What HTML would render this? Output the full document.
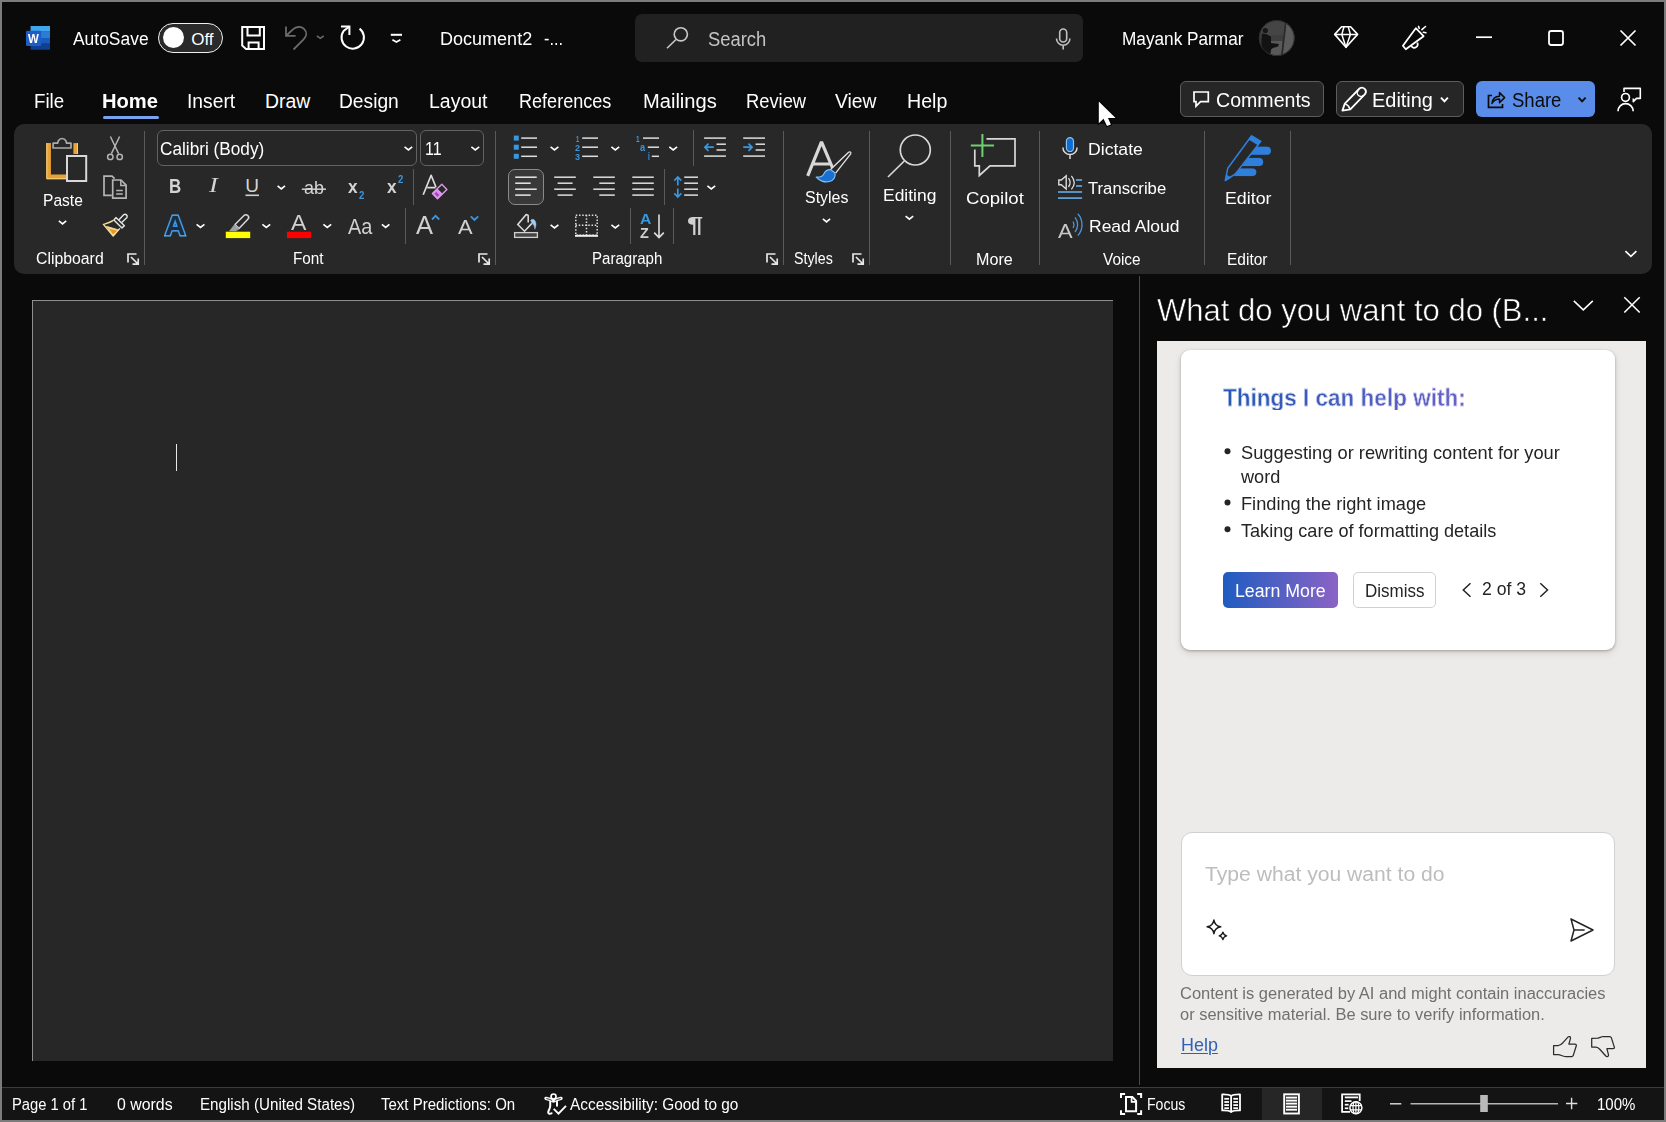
<!DOCTYPE html>
<html lang="en"><head><meta charset="utf-8"><title>Document2 - Word</title>
<style>
html,body{margin:0;padding:0;}
body{width:1666px;height:1122px;overflow:hidden;background:#0a0a0a;font-family:"Liberation Sans",sans-serif;position:relative;}
#win{position:absolute;left:0;top:0;width:1666px;height:1122px;box-sizing:border-box;border:2px solid #7c7c7c;z-index:9;pointer-events:none;}
#bg div{position:absolute;}
svg#ic{position:absolute;left:0;top:0;}
.t{position:absolute;white-space:nowrap;line-height:1;transform-origin:0 50%;}
</style></head><body>
<div id="bg">
<div style="left:14px;top:124px;width:1638px;height:150px;background:#282828;border-radius:10px;"></div>
<div style="left:635px;top:14px;width:448px;height:48px;background:#212121;border-radius:7px;"></div>
<div style="left:32px;top:300px;width:1081px;height:761px;background:#272727;border-left:1px solid #8f8f8f;border-top:1px solid #8f8f8f;box-sizing:border-box;"></div>
<div style="left:176px;top:444px;width:1px;height:27px;background:#e8e8e8;"></div>
<div style="left:1139px;top:276px;width:1px;height:809px;background:#4a4a4a;"></div>
<div style="left:2px;top:1087px;width:1662px;height:33px;background:#141414;border-top:1px solid #3c3c3c;box-sizing:border-box;"></div>
<div style="left:1262px;top:1088px;width:60px;height:32px;background:#262626;"></div>
<div style="left:1157px;top:341px;width:489px;height:727px;background:#ecebe9;"></div>
<div style="left:1181px;top:350px;width:434px;height:300px;background:#fff;border-radius:9px;box-shadow:0 1px 3px rgba(0,0,0,.28),0 3px 8px rgba(0,0,0,.10);"></div>
<div style="left:1181px;top:832px;width:434px;height:144px;background:#fff;border-radius:11px;border:1px solid #d1d1d1;box-sizing:border-box;"></div>
<div style="left:1223px;top:572px;width:115px;height:36px;background:linear-gradient(90deg,#1f5cc0,#8b63c5);border-radius:5px;"></div>
<div style="left:1353px;top:572px;width:83px;height:36px;background:#fff;border:1px solid #d1d1d1;border-radius:5px;box-sizing:border-box;"></div>
<div style="left:1180px;top:81px;width:144px;height:36px;background:#262626;border:1px solid #5c5c5c;border-radius:6px;box-sizing:border-box;"></div>
<div style="left:1336px;top:81px;width:128px;height:36px;background:#262626;border:1px solid #5c5c5c;border-radius:6px;box-sizing:border-box;"></div>
<div style="left:1476px;top:81px;width:119px;height:36px;background:#598de9;border-radius:6px;"></div>
<div style="left:102.5px;top:115.5px;width:56px;height:3px;background:#7aa2ee;border-radius:2px;"></div>
<div style="left:157px;top:130px;width:260px;height:36px;border:1px solid #626262;border-radius:6px;box-sizing:border-box;background:#262626;"></div>
<div style="left:420px;top:130px;width:64px;height:36px;border:1px solid #626262;border-radius:6px;box-sizing:border-box;background:#262626;"></div>
<div style="left:508px;top:169px;width:36px;height:36px;border:1px solid #8a8a8a;border-radius:7px;box-sizing:border-box;background:#383838;"></div>
<div style="left:158.2px;top:23px;width:64.6px;height:30px;border:1.5px solid #f0f0f0;border-radius:15px;box-sizing:border-box;background:#2a2a2a;"></div>
<div style="left:163px;top:27.3px;width:21px;height:21px;background:#fff;border-radius:50%;"></div>
<div style="left:144.0px;top:131px;width:1px;height:134px;background:#5a5a5a;"></div>
<div style="left:495.0px;top:131px;width:1px;height:134px;background:#5a5a5a;"></div>
<div style="left:783.0px;top:131px;width:1px;height:134px;background:#5a5a5a;"></div>
<div style="left:869.0px;top:131px;width:1px;height:134px;background:#5a5a5a;"></div>
<div style="left:950.0px;top:131px;width:1px;height:134px;background:#5a5a5a;"></div>
<div style="left:1039.0px;top:131px;width:1px;height:134px;background:#5a5a5a;"></div>
<div style="left:1204.0px;top:131px;width:1px;height:134px;background:#5a5a5a;"></div>
<div style="left:1290.0px;top:131px;width:1px;height:134px;background:#5a5a5a;"></div>
<div style="left:413px;top:169px;width:1px;height:36px;background:#5a5a5a;"></div>
<div style="left:405px;top:208px;width:1px;height:36px;background:#5a5a5a;"></div>
<div style="left:693px;top:130px;width:1px;height:36px;background:#5a5a5a;"></div>
<div style="left:664px;top:169px;width:1px;height:36px;background:#5a5a5a;"></div>
<div style="left:630px;top:208px;width:1px;height:36px;background:#5a5a5a;"></div>
<div style="left:673px;top:208px;width:1px;height:36px;background:#5a5a5a;"></div>
</div>
<svg id="ic" width="1666" height="1122" viewBox="0 0 1666 1122">
<rect x="30.6" y="26" width="19.4" height="5.7" fill="#41a5ee"/><rect x="30.6" y="31.6" width="19.4" height="6.4" fill="#2b7cd3"/><rect x="30.6" y="38" width="19.4" height="5.8" fill="#185abd"/><rect x="30.6" y="43.7" width="19.4" height="6" fill="#103f91"/>
<rect x="30.6" y="26" width="19.4" height="23.7" rx="1.2" fill="none"/>
<rect x="26" y="30.8" width="15.2" height="15.2" rx="1.3" fill="#1e5ec4"/>
<path d="M242.2 27H264V49H246L242.2 45.5Z" stroke="#fff" stroke-width="2" fill="none" stroke-linejoin="miter" stroke-linecap="butt" />
<path d="M247.5 27V35.6H259.8V27" stroke="#fff" stroke-width="2" fill="none" stroke-linejoin="miter" stroke-linecap="butt" />
<path d="M248.6 49V42.6H258.6V49" stroke="#fff" stroke-width="2" fill="none" stroke-linejoin="miter" stroke-linecap="butt" />
<path d="M286 26.5V35.8H295.6" stroke="#6b6b6b" stroke-width="1.8" fill="none" stroke-linejoin="miter" stroke-linecap="butt" />
<path d="M286.3 35.5L293 29.3C296 26.6 301 26 304 28.8C307.3 32 306.6 36.3 303.6 39.4L293.5 49.5" stroke="#6b6b6b" stroke-width="1.8" fill="none" stroke-linejoin="miter" stroke-linecap="butt" />
<path d="M316.90 35.85L320.30 38.35L323.70 35.85" stroke="#6b6b6b" stroke-width="1.6" fill="none" stroke-linejoin="miter" stroke-linecap="butt" />
<path d="M359.6 28.6A11.2 11.2 0 1 1 343.6 31L349 26.8" stroke="#fff" stroke-width="2" fill="none" stroke-linejoin="miter" stroke-linecap="butt" />
<path d="M341 26.6H349.4V35" stroke="#fff" stroke-width="2" fill="none" stroke-linejoin="miter" stroke-linecap="butt" />
<line x1="390.8" y1="34.8" x2="402" y2="34.8" stroke="#fff" stroke-width="2" stroke-linecap="butt"/>
<path d="M392.40 39.75L396.40 42.05L400.40 39.75" stroke="#fff" stroke-width="1.65" fill="none" stroke-linejoin="miter" stroke-linecap="butt" />
<circle cx="680.8" cy="34.3" r="6.6" stroke="#c8c8c8" stroke-width="1.6" fill="none"/>
<line x1="676" y1="39.5" x2="667" y2="48.3" stroke="#c8c8c8" stroke-width="1.6" stroke-linecap="butt"/>
<rect x="1059.7" y="29" width="7" height="13" rx="3.5" stroke="#c0c0c0" stroke-width="1.6" fill="none"/>
<path d="M1056.5 38.5A6.7 6.7 0 0 0 1069.9 38.5M1063.2 45.3V49.5" stroke="#c0c0c0" stroke-width="1.6" fill="none" stroke-linejoin="miter" stroke-linecap="butt" />
<clipPath id="av"><circle cx="1276.7" cy="38" r="17.8"/></clipPath><g clip-path="url(#av)"><rect x="1258" y="19" width="38" height="38" fill="#454545"/><polygon points="1286.5,19 1296,19 1296,58 1282.5,58" fill="#5b5b5b"/><rect x="1270.5" y="41" width="11.5" height="17" fill="#595959"/><rect x="1271" y="35" width="12" height="6" fill="#3e3e3e"/><path d="M1262 33.5L1266 34L1271 36.5V43L1279 44L1278 46.5L1273 48L1271 49.5L1270 57L1259 51Z" fill="#131313"/><circle cx="1265.3" cy="30.5" r="2.6" fill="#171717"/><rect x="1258" y="30" width="3.5" height="24" fill="#3a3a3a"/><line x1="1286" y1="21" x2="1281.6" y2="57" stroke="#2a2a2a" stroke-width="1.7"/></g><circle cx="1276.7" cy="38" r="17.5" stroke="#2a2a2a" stroke-width="1" fill="none"/>
<path d="M1341.6 26.8H1350.6L1357.6 34.4L1346 47.3L1334.7 34.4Z" stroke="#fff" stroke-width="1.6" fill="none" stroke-linejoin="round" stroke-linecap="butt" />
<path d="M1334.7 34.4H1357.6M1341.8 34.4L1346 47.3L1350.4 34.4M1341.8 34.4L1344 26.8M1350.4 34.4L1348.2 26.8" stroke="#fff" stroke-width="1.5" fill="none" stroke-linejoin="round" stroke-linecap="butt" />
<path d="M1415.8 28.2L1423.6 36.2L1405.8 49.3L1402.9 45.8Z" stroke="#fff" stroke-width="1.8" fill="none" stroke-linejoin="round" stroke-linecap="butt" />
<path d="M1411.2 45.9A3.4 3.4 0 0 0 1417.3 42.6" stroke="#fff" stroke-width="1.8" fill="none" stroke-linejoin="miter" stroke-linecap="butt" />
<path d="M1418.5 26.4L1419.2 28.2M1421.9 29.7L1425.5 26.5M1423.4 32.3L1425.9 32.8" stroke="#fff" stroke-width="1.6" fill="none" stroke-linejoin="miter" stroke-linecap="round" />
<line x1="1476" y1="37.2" x2="1492" y2="37.2" stroke="#fff" stroke-width="1.7" stroke-linecap="butt"/>
<rect x="1549" y="31" width="14" height="14" rx="2.2" stroke="#fff" stroke-width="1.8" fill="none"/>
<path d="M1620.5 30.5L1635.5 45.5M1635.5 30.5L1620.5 45.5" stroke="#fff" stroke-width="1.7" fill="none" stroke-linejoin="miter" stroke-linecap="butt" />
<path d="M1194 92H1208.3V101.7H1200.6L1196 106.2V101.7H1194Z" stroke="#fff" stroke-width="1.7" fill="none" stroke-linejoin="miter" stroke-linecap="butt" />
<path d="M1344.8 103.6L1359.5 88.5A4 4 0 0 1 1365 94.2L1350.3 109.4L1342.4 110.6Z" stroke="#fff" stroke-width="1.8" fill="none" stroke-linejoin="round" stroke-linecap="butt" />
<path d="M1344.8 103.6Q1348.6 105 1350.3 109.4" stroke="#fff" stroke-width="1.5" fill="none" stroke-linejoin="miter" stroke-linecap="butt" />
<path d="M1358.3 90.4A3.2 3.2 0 0 0 1363.2 95.4" stroke="#fff" stroke-width="1.4" fill="none" stroke-linejoin="miter" stroke-linecap="butt" />
<path d="M1441.00 97.60L1444.45 101.30L1447.90 97.60" stroke="#fff" stroke-width="1.9" fill="none" stroke-linejoin="miter" stroke-linecap="butt" />
<path d="M1492 95.5H1488.5V107.3H1502.5V104" stroke="#0b0b0b" stroke-width="1.7" fill="none" stroke-linejoin="miter" stroke-linecap="butt" />
<path d="M1492 103.5C1492.5 98.5 1495.5 96.3 1499.5 96.3V92.6L1504.6 97.6L1499.5 102.6V99C1496.5 99 1494 100 1492 103.5Z" stroke="#0b0b0b" stroke-width="1.5" fill="none" stroke-linejoin="round" stroke-linecap="butt" />
<path d="M1578.60 97.60L1582.10 101.30L1585.60 97.60" stroke="#0b0b0b" stroke-width="1.9" fill="none" stroke-linejoin="miter" stroke-linecap="butt" />
<circle cx="1625.5" cy="97.4" r="3.9" stroke="#fff" stroke-width="1.7" fill="none"/>
<path d="M1618 111.2A7.6 7.6 0 0 1 1633.2 111.2" stroke="#fff" stroke-width="1.7" fill="none" stroke-linejoin="miter" stroke-linecap="butt" />
<path d="M1624 92V88.4H1640.3V98.4H1636.5L1633.3 101.6V98.6" stroke="#fff" stroke-width="1.6" fill="none" stroke-linejoin="round" stroke-linecap="butt" />
<path d="M1098.8 101.5V123.2L1103.5 118.8L1107 125.9L1110.9 124.4L1108 118.1H1115.6Z" fill="#fff" stroke="#000" stroke-width="2" paint-order="stroke" stroke-linejoin="miter"/>
<path d="M48.6 143.1V176.9H66.5" stroke="#e9a334" stroke-width="4.6" fill="none" stroke-linejoin="miter" stroke-linecap="butt" />
<path d="M75.7 143.1V154" stroke="#e9a334" stroke-width="4.6" fill="none" stroke-linejoin="miter" stroke-linecap="butt" />
<path d="M46.8 143.1V178.7H66" stroke="#f7cf80" stroke-width="1" fill="none" stroke-linejoin="miter" stroke-linecap="butt" />
<path d="M77.5 143.1V154" stroke="#f7cf80" stroke-width="1" fill="none" stroke-linejoin="miter" stroke-linecap="butt" />
<path d="M53.1 143.2H57.6C57.9 142.3 58 141.5 58.3 140.8A4.3 4.3 0 0 1 65.9 140.8C66.2 141.6 66.3 142.3 66.6 143.2H71V148H53.1Z" stroke="#ababab" stroke-width="1.7" fill="#282828" stroke-linejoin="round" stroke-linecap="butt" />
<rect x="67" y="156" width="19.2" height="25" rx="0" stroke="#d8d8d8" stroke-width="2" fill="#282828"/>
<path d="M58.90 220.85L62.55 223.85L66.20 220.85" stroke="#fff" stroke-width="1.65" fill="none" stroke-linejoin="miter" stroke-linecap="butt" />
<path d="M110.4 136.5L118.6 153.6M119.6 136.5L111.4 153.6" stroke="#b4b4b4" stroke-width="1.5" fill="none" stroke-linejoin="miter" stroke-linecap="butt" />
<circle cx="110.3" cy="156.9" r="2.7" stroke="#b4b4b4" stroke-width="1.5" fill="none"/><circle cx="119.7" cy="156.9" r="2.7" stroke="#b4b4b4" stroke-width="1.5" fill="none"/>
<path d="M111.8 195.3H104V176.1H112L114.6 178.7" stroke="#b4b4b4" stroke-width="1.7" fill="none" stroke-linejoin="miter" stroke-linecap="butt" />
<path d="M112.7 180H121L126.1 185.2V198.2H112.7Z" stroke="#b4b4b4" stroke-width="1.7" fill="none" stroke-linejoin="miter" stroke-linecap="butt" />
<path d="M120.8 180V185.4H126.1" stroke="#b4b4b4" stroke-width="1.5" fill="none" stroke-linejoin="miter" stroke-linecap="butt" />
<path d="M116.2 190.4H122.8M116.2 193.9H122.8" stroke="#b4b4b4" stroke-width="1.5" fill="none" stroke-linejoin="miter" stroke-linecap="butt" />
<path d="M106.5 226.3L118.3 229.8L113.2 235.4Z" stroke="#f6d98f" stroke-width="0.8" fill="#f6d98f" stroke-linejoin="round" stroke-linecap="butt" />
<path d="M109.9 229.3L117.2 231L112.9 233.9Z" stroke="#e6952a" stroke-width="0.6" fill="#e6952a" stroke-linejoin="round" stroke-linecap="butt" />
<path d="M113.4 220.4C110 222.6 106 223.6 103.4 224.4L113.2 236L119.9 228.4" stroke="#f8df9c" stroke-width="1.4" fill="none" stroke-linejoin="round" stroke-linecap="butt" />
<path d="M113.9 220L115.9 217.6L124.4 225.8L122 227.9Z" stroke="#e6e6e6" stroke-width="1.4" fill="none" stroke-linejoin="round" stroke-linecap="butt" />
<path d="M119 219.8L123.9 214.6A2.2 2.2 0 0 1 127 217.4L121.7 222.6" stroke="#e6e6e6" stroke-width="1.4" fill="none" stroke-linejoin="round" stroke-linecap="butt" />
<path d="M136.5 254H128V262.5" stroke="#e6e6e6" stroke-width="1.7" fill="none" stroke-linejoin="miter" stroke-linecap="butt" />
<path d="M131 257L138 264M132.5 264.2H138.2V258.5" stroke="#e6e6e6" stroke-width="1.7" fill="none" stroke-linejoin="miter" stroke-linecap="butt" />
<path d="M404.60 146.95L408.40 149.95L412.20 146.95" stroke="#fff" stroke-width="1.65" fill="none" stroke-linejoin="miter" stroke-linecap="butt" />
<path d="M471.40 146.95L475.30 149.95L479.20 146.95" stroke="#fff" stroke-width="1.65" fill="none" stroke-linejoin="miter" stroke-linecap="butt" />
<path d="M277.60 185.85L281.30 188.85L285.00 185.85" stroke="#fff" stroke-width="1.65" fill="none" stroke-linejoin="miter" stroke-linecap="butt" />
<line x1="245.5" y1="195.3" x2="259" y2="195.3" stroke="#d0d0d0" stroke-width="1.6" stroke-linecap="butt"/>
<line x1="301.8" y1="189.2" x2="326" y2="189.2" stroke="#d0d0d0" stroke-width="1.5" stroke-linecap="butt"/>
<path d="M423.2 194.8L431.15 175.3L436 187.2M427.3 187.6H435.6" stroke="#dcdcdc" stroke-width="1.7" fill="none" stroke-linejoin="round" stroke-linecap="butt" />
<path d="M437 189.2L442.2 194.3L437.5 198.8L432.4 193.5Z" stroke="#d690e6" stroke-width="0.5" fill="#d690e6" stroke-linejoin="miter" stroke-linecap="butt" />
<path d="M436.3 192.2L439 194.9L437.4 196.6L434.7 193.8Z" stroke="#a63fc2" stroke-width="0.5" fill="#a63fc2" stroke-linejoin="miter" stroke-linecap="butt" />
<path d="M441.8 184.3L446.9 189.4L437.5 198.8L432.4 193.5Z" stroke="#d99ce8" stroke-width="1.4" fill="none" stroke-linejoin="round" stroke-linecap="butt" />
<path d="M437 189.2L442.2 194.3" stroke="#d99ce8" stroke-width="1.4" fill="none" stroke-linejoin="miter" stroke-linecap="butt" />
<path d="M196.60 224.35L200.50 227.45L204.40 224.35" stroke="#fff" stroke-width="1.65" fill="none" stroke-linejoin="miter" stroke-linecap="butt" />
<path d="M262.40 224.35L266.30 227.45L270.20 224.35" stroke="#fff" stroke-width="1.65" fill="none" stroke-linejoin="miter" stroke-linecap="butt" />
<path d="M323.40 224.35L327.30 227.45L331.20 224.35" stroke="#fff" stroke-width="1.65" fill="none" stroke-linejoin="miter" stroke-linecap="butt" />
<path d="M381.90 224.35L385.65 227.45L389.40 224.35" stroke="#fff" stroke-width="1.65" fill="none" stroke-linejoin="miter" stroke-linecap="butt" />
<rect x="225.8" y="231.7" width="24.4" height="6.4" fill="#ffff00"/>
<path d="M235 224.5L244 215.5A2.6 2.6 0 0 1 247.8 219.3L239 228.5Z" stroke="#d8d8d8" stroke-width="1.5" fill="none" stroke-linejoin="round" stroke-linecap="butt" />
<path d="M234.5 224.5L239 229L236 231H229.5Z" stroke="#a0a0a0" stroke-width="0.6" fill="#a0a0a0" stroke-linejoin="miter" stroke-linecap="butt" />
<rect x="287" y="231.7" width="24.2" height="6.4" fill="#ff0000"/>
<path d="M432 219.5L435.6 215.8L439.2 219.5" stroke="#3a96dd" stroke-width="1.8" fill="none" stroke-linejoin="miter" stroke-linecap="butt" />
<path d="M470.8 216.3L474.5 220L478.2 216.3" stroke="#3a96dd" stroke-width="1.8" fill="none" stroke-linejoin="miter" stroke-linecap="butt" />
<path d="M487.5 254H479V262.5" stroke="#e6e6e6" stroke-width="1.7" fill="none" stroke-linejoin="miter" stroke-linecap="butt" />
<path d="M482 257L489 264M483.5 264.2H489.2V258.5" stroke="#e6e6e6" stroke-width="1.7" fill="none" stroke-linejoin="miter" stroke-linecap="butt" />
<rect x="513.8" y="135.6" width="5" height="5" fill="#3a96dd"/>
<line x1="521.2" y1="138.1" x2="537" y2="138.1" stroke="#dedede" stroke-width="1.5" stroke-linecap="butt"/>
<line x1="582.2" y1="138.1" x2="598" y2="138.1" stroke="#dedede" stroke-width="1.5" stroke-linecap="butt"/>
<rect x="513.8" y="144.7" width="5" height="5" fill="#3a96dd"/>
<line x1="521.2" y1="147.2" x2="537" y2="147.2" stroke="#dedede" stroke-width="1.5" stroke-linecap="butt"/>
<line x1="582.2" y1="147.2" x2="598" y2="147.2" stroke="#dedede" stroke-width="1.5" stroke-linecap="butt"/>
<rect x="513.8" y="153.8" width="5" height="5" fill="#3a96dd"/>
<line x1="521.2" y1="156.3" x2="537" y2="156.3" stroke="#dedede" stroke-width="1.5" stroke-linecap="butt"/>
<line x1="582.2" y1="156.3" x2="598" y2="156.3" stroke="#dedede" stroke-width="1.5" stroke-linecap="butt"/>
<path d="M550.60 146.95L554.50 149.95L558.40 146.95" stroke="#fff" stroke-width="1.65" fill="none" stroke-linejoin="miter" stroke-linecap="butt" />
<path d="M611.40 146.95L615.30 149.95L619.20 146.95" stroke="#fff" stroke-width="1.65" fill="none" stroke-linejoin="miter" stroke-linecap="butt" />
<path d="M669.30 146.95L673.20 149.95L677.10 146.95" stroke="#fff" stroke-width="1.65" fill="none" stroke-linejoin="miter" stroke-linecap="butt" />
<line x1="643" y1="138.1" x2="659" y2="138.1" stroke="#dedede" stroke-width="1.5" stroke-linecap="butt"/>
<line x1="647.8" y1="147.2" x2="659" y2="147.2" stroke="#dedede" stroke-width="1.5" stroke-linecap="butt"/>
<line x1="651.8" y1="156.3" x2="659" y2="156.3" stroke="#dedede" stroke-width="1.5" stroke-linecap="butt"/>
<line x1="704.1" y1="138.1" x2="725.9" y2="138.1" stroke="#dedede" stroke-width="1.5" stroke-linecap="butt"/>
<line x1="704.1" y1="156.1" x2="725.9" y2="156.1" stroke="#dedede" stroke-width="1.5" stroke-linecap="butt"/>
<line x1="716.5" y1="144.2" x2="725.9" y2="144.2" stroke="#dedede" stroke-width="1.5" stroke-linecap="butt"/>
<line x1="716.5" y1="150" x2="725.9" y2="150" stroke="#dedede" stroke-width="1.5" stroke-linecap="butt"/>
<line x1="743.2" y1="138.1" x2="765.0" y2="138.1" stroke="#dedede" stroke-width="1.5" stroke-linecap="butt"/>
<line x1="743.2" y1="156.1" x2="765.0" y2="156.1" stroke="#dedede" stroke-width="1.5" stroke-linecap="butt"/>
<line x1="755.6" y1="144.2" x2="765.0" y2="144.2" stroke="#dedede" stroke-width="1.5" stroke-linecap="butt"/>
<line x1="755.6" y1="150" x2="765.0" y2="150" stroke="#dedede" stroke-width="1.5" stroke-linecap="butt"/>
<path d="M713.8 147.2H705M708.5 143.6L704.9 147.2L708.5 150.8" stroke="#3a96dd" stroke-width="1.7" fill="none" stroke-linejoin="miter" stroke-linecap="butt" />
<path d="M743.2 147.2H752M748.5 143.6L752.1 147.2L748.5 150.8" stroke="#3a96dd" stroke-width="1.7" fill="none" stroke-linejoin="miter" stroke-linecap="butt" />
<line x1="515.2" y1="177.2" x2="536.7" y2="177.2" stroke="#e8e8e8" stroke-width="1.5" stroke-linecap="butt"/>
<line x1="554.2" y1="177.2" x2="575.8" y2="177.2" stroke="#dedede" stroke-width="1.5" stroke-linecap="butt"/>
<line x1="593.3" y1="177.2" x2="614.8" y2="177.2" stroke="#dedede" stroke-width="1.5" stroke-linecap="butt"/>
<line x1="632.3" y1="177.2" x2="653.8" y2="177.2" stroke="#dedede" stroke-width="1.5" stroke-linecap="butt"/>
<line x1="684.2" y1="177.2" x2="698" y2="177.2" stroke="#dedede" stroke-width="1.5" stroke-linecap="butt"/>
<line x1="515.2" y1="183.2" x2="530.7" y2="183.2" stroke="#e8e8e8" stroke-width="1.5" stroke-linecap="butt"/>
<line x1="557.6" y1="183.2" x2="572.6" y2="183.2" stroke="#dedede" stroke-width="1.5" stroke-linecap="butt"/>
<line x1="599.3" y1="183.2" x2="614.8" y2="183.2" stroke="#dedede" stroke-width="1.5" stroke-linecap="butt"/>
<line x1="632.3" y1="183.2" x2="653.8" y2="183.2" stroke="#dedede" stroke-width="1.5" stroke-linecap="butt"/>
<line x1="684.2" y1="183.2" x2="698" y2="183.2" stroke="#dedede" stroke-width="1.5" stroke-linecap="butt"/>
<line x1="515.2" y1="189.2" x2="536.7" y2="189.2" stroke="#e8e8e8" stroke-width="1.5" stroke-linecap="butt"/>
<line x1="554.2" y1="189.2" x2="575.8" y2="189.2" stroke="#dedede" stroke-width="1.5" stroke-linecap="butt"/>
<line x1="593.3" y1="189.2" x2="614.8" y2="189.2" stroke="#dedede" stroke-width="1.5" stroke-linecap="butt"/>
<line x1="632.3" y1="189.2" x2="653.8" y2="189.2" stroke="#dedede" stroke-width="1.5" stroke-linecap="butt"/>
<line x1="684.2" y1="189.2" x2="698" y2="189.2" stroke="#dedede" stroke-width="1.5" stroke-linecap="butt"/>
<line x1="515.2" y1="195.1" x2="530.7" y2="195.1" stroke="#e8e8e8" stroke-width="1.5" stroke-linecap="butt"/>
<line x1="557.6" y1="195.1" x2="572.6" y2="195.1" stroke="#dedede" stroke-width="1.5" stroke-linecap="butt"/>
<line x1="599.3" y1="195.1" x2="614.8" y2="195.1" stroke="#dedede" stroke-width="1.5" stroke-linecap="butt"/>
<line x1="632.3" y1="195.1" x2="653.8" y2="195.1" stroke="#dedede" stroke-width="1.5" stroke-linecap="butt"/>
<line x1="684.2" y1="195.1" x2="698" y2="195.1" stroke="#dedede" stroke-width="1.5" stroke-linecap="butt"/>
<path d="M677.8 177V185.6M674.3 180.6L677.8 177L681.3 180.6M677.8 188.4V197M674.3 193.4L677.8 197L681.3 193.4" stroke="#3a96dd" stroke-width="1.7" fill="none" stroke-linejoin="miter" stroke-linecap="butt" />
<path d="M707.40 185.85L711.30 188.85L715.20 185.85" stroke="#fff" stroke-width="1.65" fill="none" stroke-linejoin="miter" stroke-linecap="butt" />
<rect x="514.6" y="232.6" width="22.8" height="4.8" rx="0" stroke="#d0d0d0" stroke-width="1.3" fill="#454545"/>
<path d="M526 214.7L517.8 224.5L524.5 231.2L531.9 223.4" stroke="#d8d8d8" stroke-width="1.6" fill="none" stroke-linejoin="miter" stroke-linecap="butt" />
<path d="M525.5 215.2A1.55 1.55 0 0 1 528.2 215.8V222.6" stroke="#d8d8d8" stroke-width="1.6" fill="none" stroke-linejoin="miter" stroke-linecap="butt" />
<path d="M530.6 220.3C532 218.8 534 219 535.2 221C536.6 223.5 536 227 534.8 229.3C534.6 226.5 533.8 224.5 532.2 223.6C531.4 222.3 531 221.3 530.6 220.3Z" stroke="#9fcbf0" stroke-width="0.4" fill="#9fcbf0" stroke-linejoin="miter" stroke-linecap="butt" />
<path d="M550.60 224.85L554.50 227.95L558.40 224.85" stroke="#fff" stroke-width="1.65" fill="none" stroke-linejoin="miter" stroke-linecap="butt" />
<rect x="575.8" y="215.2" width="21.4" height="20" stroke="#dedede" stroke-width="1.5" fill="none" stroke-dasharray="1.5 1.7"/>
<line x1="586.5" y1="215" x2="586.5" y2="235" stroke="#dedede" stroke-width="1.5" stroke-dasharray="1.5 1.7"/>
<line x1="575.5" y1="225.2" x2="597.5" y2="225.2" stroke="#dedede" stroke-width="1.5" stroke-dasharray="1.5 1.7"/>
<line x1="575" y1="235.8" x2="598" y2="235.8" stroke="#f0f0f0" stroke-width="2" stroke-linecap="butt"/>
<path d="M611.40 224.85L615.30 227.95L619.20 224.85" stroke="#fff" stroke-width="1.65" fill="none" stroke-linejoin="miter" stroke-linecap="butt" />
<path d="M659 214.5V237.4M654.2 232.6L659 237.6L663.8 232.6" stroke="#dedede" stroke-width="1.6" fill="none" stroke-linejoin="miter" stroke-linecap="butt" />
<path d="M775.5 254H767V262.5" stroke="#e6e6e6" stroke-width="1.7" fill="none" stroke-linejoin="miter" stroke-linecap="butt" />
<path d="M770 257L777 264M771.5 264.2H777.2V258.5" stroke="#e6e6e6" stroke-width="1.7" fill="none" stroke-linejoin="miter" stroke-linecap="butt" />
<path d="M807.7 175.9L821.5 141.8L832.8 168.5M813.6 164H831" stroke="#d8d8d8" stroke-width="3.2" fill="none" stroke-linejoin="bevel" stroke-linecap="butt" />
<path d="M830.8 169.2L848.6 152.2C849.8 151.3 851.4 152.2 850.7 153.8L835.6 173.2" stroke="#e4e4e4" stroke-width="1.3" fill="#282828" stroke-linejoin="round" stroke-linecap="butt" />
<path d="M830.6 169.6C826.5 169.5 824.5 172 823.5 174.5C822.5 176.5 819.5 177.3 816.2 177.2C819 180.5 824.5 182.8 829.5 181.5C834 180.3 836.2 176.2 834.8 172.8Z" stroke="#7cc0f5" stroke-width="1.2" fill="#1b6fd0" stroke-linejoin="round" stroke-linecap="butt" />
<path d="M822.90 218.85L826.50 221.85L830.10 218.85" stroke="#fff" stroke-width="1.65" fill="none" stroke-linejoin="miter" stroke-linecap="butt" />
<path d="M861.5 254H853V262.5" stroke="#e6e6e6" stroke-width="1.7" fill="none" stroke-linejoin="miter" stroke-linecap="butt" />
<path d="M856 257L863 264M857.5 264.2H863.2V258.5" stroke="#e6e6e6" stroke-width="1.7" fill="none" stroke-linejoin="miter" stroke-linecap="butt" />
<circle cx="915.3" cy="150" r="15" stroke="#d8d8d8" stroke-width="1.7" fill="none"/>
<line x1="904.3" y1="161" x2="888" y2="177" stroke="#d8d8d8" stroke-width="1.7" stroke-linecap="butt"/>
<path d="M905.60 216.15L909.40 219.15L913.20 216.15" stroke="#fff" stroke-width="1.65" fill="none" stroke-linejoin="miter" stroke-linecap="butt" />
<path d="M986.5 138.8H1015V165.8H990L979.3 175.5V165.8H974.8V149.6" stroke="#d8d8d8" stroke-width="1.7" fill="none" stroke-linejoin="miter" stroke-linecap="butt" />
<path d="M982.4 134V157M970.8 145.4H994" stroke="#6fd06f" stroke-width="2" fill="none" stroke-linejoin="miter" stroke-linecap="butt" />
<path d="M1062.9 147.5A7.1 7.1 0 0 0 1077.1 147.5M1070 154.6V158.9" stroke="#dcdcdc" stroke-width="1.5" fill="none" stroke-linejoin="miter" stroke-linecap="butt" />
<rect x="1066.4" y="137.7" width="7.1" height="13.8" rx="3.55" fill="#0f6cd0" stroke="#86c4f5" stroke-width="1.2"/>
<path d="M1058.8 180H1061.3L1066.2 175.7V189L1061.3 184.7H1058.8Z" stroke="#dcdcdc" stroke-width="1.4" fill="none" stroke-linejoin="miter" stroke-linecap="butt" />
<path d="M1068.5 178.2Q1071.8 182.5 1068.5 187M1071.4 175.8Q1077 182.5 1071.4 189.4" stroke="#dcdcdc" stroke-width="1.3" fill="none" stroke-linejoin="miter" stroke-linecap="butt" />
<line x1="1076" y1="180" x2="1082.1" y2="180" stroke="#62a6de" stroke-width="1.7" stroke-linecap="butt"/>
<line x1="1076" y1="186" x2="1082.1" y2="186" stroke="#62a6de" stroke-width="1.7" stroke-linecap="butt"/>
<line x1="1058" y1="192" x2="1082.1" y2="192" stroke="#62a6de" stroke-width="1.7" stroke-linecap="butt"/>
<line x1="1058" y1="198.1" x2="1082.1" y2="198.1" stroke="#62a6de" stroke-width="1.7" stroke-linecap="butt"/>
<path d="M1073.2 221.4A8.1 8.1 0 0 1 1073.2 228M1075 217.3A11.8 11.8 0 0 1 1075 232.1M1077.8 213.8A16.2 16.2 0 0 1 1077.8 235.6" stroke="#4a98dc" stroke-width="1.3" fill="none" stroke-linejoin="miter" stroke-linecap="butt" />
<path d="M1257.0 146.7H1266.9A4.00 4.00 0 0 1 1266.9 154.7H1250.7Z" stroke="#2f80dc" stroke-width="0.2" fill="#2f80dc" stroke-linejoin="miter" stroke-linecap="butt" />
<path d="M1248.1 158H1259.2A3.95 3.95 0 0 1 1259.2 165.9H1241.9Z" stroke="#2f80dc" stroke-width="0.2" fill="#2f80dc" stroke-linejoin="miter" stroke-linecap="butt" />
<path d="M1239.9 168.4H1252.5A3.75 3.75 0 0 1 1252.5 175.9H1234.0Z" stroke="#2f80dc" stroke-width="0.2" fill="#2f80dc" stroke-linejoin="miter" stroke-linecap="butt" />
<path d="M1225.3 180.5L1227.8 168.2L1251.6 135.8L1260.8 141.3L1235.4 173.9Z" stroke="#2f80dc" stroke-width="1.5" fill="none" stroke-linejoin="round" stroke-linecap="butt" />
<path d="M1251.6 135.8L1260.8 141.3L1258 144.9L1248.8 139.4Z" stroke="#2f80dc" stroke-width="0.6" fill="#2f80dc" stroke-linejoin="round" stroke-linecap="butt" />
<path d="M1225.3 180.5L1226.6 175L1231 177.6Z" stroke="#2f80dc" stroke-width="0.6" fill="#2f80dc" stroke-linejoin="round" stroke-linecap="butt" />
<path d="M1625.40 251.05L1630.90 256.35L1636.40 251.05" stroke="#fff" stroke-width="1.65" fill="none" stroke-linejoin="miter" stroke-linecap="butt" />
<path d="M1573.80 300.85L1583.30 309.85L1592.80 300.85" stroke="#fff" stroke-width="1.5" fill="none" stroke-linejoin="miter" stroke-linecap="butt" />
<path d="M1624.3 297.3L1639.7 312.5M1639.7 297.3L1624.3 312.5" stroke="#fff" stroke-width="1.6" fill="none" stroke-linejoin="miter" stroke-linecap="butt" />
<path d="M1470.5 583.3L1463.3 590L1470.5 596.7" stroke="#242424" stroke-width="1.5" fill="none" stroke-linejoin="miter" stroke-linecap="butt" />
<path d="M1540.3 583.3L1547.5 590L1540.3 596.7" stroke="#242424" stroke-width="1.5" fill="none" stroke-linejoin="miter" stroke-linecap="butt" />
<circle cx="1227.5" cy="451.2" r="3" fill="#242424"/>
<circle cx="1227.5" cy="502.4" r="3" fill="#242424"/>
<circle cx="1227.5" cy="529.3" r="3" fill="#242424"/>
<path d="M1213.90 920.05C1214.58 923.99 1216.76 926.17 1220.70 926.85C1216.76 927.53 1214.58 929.71 1213.90 933.65C1213.22 929.71 1211.04 927.53 1207.10 926.85C1211.04 926.17 1213.22 923.99 1213.90 920.05Z" stroke="#1a1a1a" stroke-width="1.5" fill="none" stroke-linejoin="round" stroke-linecap="butt" />
<path d="M1222.90 932.20C1223.34 934.05 1224.75 935.46 1226.60 935.90C1224.75 936.34 1223.34 937.75 1222.90 939.60C1222.46 937.75 1221.05 936.34 1219.20 935.90C1221.05 935.46 1222.46 934.05 1222.90 932.20Z" stroke="#1a1a1a" stroke-width="1.4" fill="none" stroke-linejoin="round" stroke-linecap="butt" />
<path d="M1571 919L1593 930L1571 941L1574 930ZM1574 930H1584.6" stroke="#242424" stroke-width="1.5" fill="none" stroke-linejoin="round" stroke-linecap="butt" />
<path d="M1553.6 1045.7L1558 1045.6C1560.5 1045.4 1561.5 1044.3 1563 1042.7L1567.9 1037.2C1569 1036 1570.8 1036.6 1570.5 1038.3L1568.9 1044.1H1574.8C1576 1044.1 1576.6 1044.8 1576.3 1045.8L1573.2 1055.6C1572.9 1056.3 1572.5 1056.5 1571.8 1056.5H1565.2C1562.5 1056.3 1560.5 1054.7 1558.3 1054.6H1553.6Z" stroke="#2b2b2b" stroke-width="1.25" fill="none" stroke-linejoin="round" stroke-linecap="butt" />
<path d="M1591.7 1038.4L1597.6 1038.2C1599.8 1037.8 1601 1036.8 1603.2 1036.5H1609.7C1610.6 1036.5 1611 1036.8 1611.3 1037.6L1614.4 1047.4C1614.6 1048.2 1614 1048.6 1613 1048.6L1606.9 1048.7L1608.5 1054.8C1608.8 1056.4 1607 1057.2 1605.8 1056L1600 1049.5C1598.8 1048.2 1597.6 1047.2 1596 1047.1H1591.7Z" stroke="#2b2b2b" stroke-width="1.25" fill="none" stroke-linejoin="round" stroke-linecap="butt" />
<path d="M1121 1097.9V1094.1H1125.1M1137.2 1094.1H1141.1V1097.9M1141.1 1110.2V1114H1137.2M1125.1 1114H1121V1110.2" stroke="#fff" stroke-width="2" fill="none" stroke-linejoin="miter" stroke-linecap="butt" />
<path d="M1126 1097.1H1132.4L1136.1 1100.9V1111.2H1126Z" stroke="#fff" stroke-width="2" fill="none" stroke-linejoin="miter" stroke-linecap="butt" />
<path d="M1131.6 1097.1V1101.9H1136.1" stroke="#fff" stroke-width="1.7" fill="none" stroke-linejoin="miter" stroke-linecap="butt" />
<path d="M1231.1 1096C1229 1094.4 1226 1094.3 1222.2 1094.4V1110.4C1226 1110.3 1229 1110.4 1231.1 1112C1233.2 1110.4 1236.2 1110.3 1240 1110.4V1094.4C1236.2 1094.3 1233.2 1094.4 1231.1 1096ZM1231.1 1096V1112" stroke="#fff" stroke-width="1.8" fill="none" stroke-linejoin="round" stroke-linecap="butt" />
<line x1="1224.3" y1="1098.8" x2="1229" y2="1098.8" stroke="#fff" stroke-width="1.8" stroke-linecap="butt"/>
<line x1="1233.3" y1="1098.8" x2="1238" y2="1098.8" stroke="#fff" stroke-width="1.8" stroke-linecap="butt"/>
<line x1="1224.3" y1="1102" x2="1229" y2="1102" stroke="#fff" stroke-width="1.8" stroke-linecap="butt"/>
<line x1="1233.3" y1="1102" x2="1238" y2="1102" stroke="#fff" stroke-width="1.8" stroke-linecap="butt"/>
<line x1="1224.3" y1="1105.1" x2="1229" y2="1105.1" stroke="#fff" stroke-width="1.8" stroke-linecap="butt"/>
<line x1="1233.3" y1="1105.1" x2="1238" y2="1105.1" stroke="#fff" stroke-width="1.8" stroke-linecap="butt"/>
<line x1="1224.3" y1="1108.2" x2="1229" y2="1108.2" stroke="#fff" stroke-width="1.8" stroke-linecap="butt"/>
<line x1="1233.3" y1="1108.2" x2="1238" y2="1108.2" stroke="#fff" stroke-width="1.8" stroke-linecap="butt"/>
<rect x="1284.2" y="1094.3" width="14.7" height="19.2" rx="0" stroke="#fff" stroke-width="1.9" fill="none"/>
<line x1="1286" y1="1097.6" x2="1297" y2="1097.6" stroke="#fff" stroke-width="1.9" stroke-linecap="butt"/>
<line x1="1286" y1="1100.6" x2="1297" y2="1100.6" stroke="#fff" stroke-width="1.9" stroke-linecap="butt"/>
<line x1="1286" y1="1103.6" x2="1297" y2="1103.6" stroke="#fff" stroke-width="1.9" stroke-linecap="butt"/>
<line x1="1286" y1="1106.7" x2="1297" y2="1106.7" stroke="#fff" stroke-width="1.9" stroke-linecap="butt"/>
<line x1="1286" y1="1109.7" x2="1297" y2="1109.7" stroke="#fff" stroke-width="1.9" stroke-linecap="butt"/>
<path d="M1350 1111.9H1342.1V1094.3H1359.7V1101" stroke="#fff" stroke-width="1.8" fill="none" stroke-linejoin="miter" stroke-linecap="butt" />
<line x1="1344.8" y1="1097.4" x2="1358" y2="1097.4" stroke="#fff" stroke-width="1.8" stroke-linecap="butt"/>
<line x1="1344.8" y1="1101.1" x2="1351.5" y2="1101.1" stroke="#fff" stroke-width="1.7" stroke-linecap="butt"/>
<line x1="1344.8" y1="1104.7" x2="1348.6" y2="1104.7" stroke="#fff" stroke-width="1.7" stroke-linecap="butt"/>
<line x1="1344.8" y1="1108.3" x2="1348.3" y2="1108.3" stroke="#fff" stroke-width="1.7" stroke-linecap="butt"/>
<circle cx="1355.9" cy="1107.7" r="6" stroke="#fff" stroke-width="1.5" fill="#141414"/>
<path d="M1349.9 1105.6H1361.9M1349.9 1109.8H1361.9M1355.9 1101.7V1113.7" stroke="#fff" stroke-width="1.2" fill="none" stroke-linejoin="miter" stroke-linecap="butt" />
<ellipse cx="1355.9" cy="1107.7" rx="2.9" ry="6" stroke="#fff" stroke-width="1.2" fill="none"/>
<line x1="1390" y1="1103.8" x2="1401.3" y2="1103.8" stroke="#e0e0e0" stroke-width="1.4" stroke-linecap="butt"/>
<line x1="1410.5" y1="1103.8" x2="1558" y2="1103.8" stroke="#b4b4b4" stroke-width="1.5" stroke-linecap="butt"/>
<rect x="1480.2" y="1095" width="7.6" height="17" fill="#b8b8b8"/>
<path d="M1566 1103.5H1577.3M1571.6 1097.8V1109.2" stroke="#e0e0e0" stroke-width="1.4" fill="none" stroke-linejoin="miter" stroke-linecap="butt" />
<path d="M546 1098.4Q549.5 1099.2 553.5 1101Q557.5 1099.2 561 1098.4" stroke="#fff" stroke-width="3.4" fill="none" stroke-linejoin="round" stroke-linecap="round" />
<path d="M546.7 1098.6Q549.5 1099.3 551.8 1100.3M555.2 1100.3Q557.5 1099.3 560.3 1098.6" stroke="#141414" stroke-width="0.9" fill="none" stroke-linejoin="miter" stroke-linecap="round" />
<circle cx="553.55" cy="1096.5" r="2.5" stroke="#fff" stroke-width="1.7" fill="#141414"/>
<path d="M550.2 1101.8V1106C550 1109 548.3 1110.5 548.2 1112.2C548.2 1114 550.3 1114.2 551.6 1113.2" stroke="#fff" stroke-width="2" fill="none" stroke-linejoin="round" stroke-linecap="round" />
<path d="M557 1101.8V1105.8" stroke="#fff" stroke-width="2" fill="none" stroke-linejoin="miter" stroke-linecap="round" />
<path d="M553.7 1108.9L558.5 1113.7L566 1105.8" stroke="#fff" stroke-width="1.9" fill="none" stroke-linejoin="miter" stroke-linecap="butt" />
</svg>
<div id="tx">
<span class="t" style="left:28.00px;top:32px;font-size:13.6px;color:#fff;font-weight:700;transform:scaleX(0.8412);">W</span>
<span class="t" style="left:73.20px;top:31px;font-size:17.6px;color:#fff;transform:scaleX(0.9906);">AutoSave</span>
<span class="t" style="left:191.20px;top:31px;font-size:17px;color:#fff;">Off</span>
<span class="t" style="left:440.00px;top:31px;font-size:17.6px;color:#fff;transform:scaleX(1.0244);">Document2</span>
<span class="t" style="left:543.60px;top:31px;font-size:17.6px;color:#fff;transform:scaleX(0.9251);">-...</span>
<span class="t" style="left:707.50px;top:29px;font-size:20px;color:#c4c4c4;transform:scaleX(0.9201);">Search</span>
<span class="t" style="left:1122.00px;top:31px;font-size:17.6px;color:#fff;transform:scaleX(0.9781);">Mayank Parmar</span>
<span class="t" style="left:34.00px;top:92px;font-size:19.4px;color:#fff;transform:scaleX(0.9663);">File</span>
<span class="t" style="left:186.50px;top:92px;font-size:19.4px;color:#fff;transform:scaleX(0.9934);">Insert</span>
<span class="t" style="left:265.00px;top:92px;font-size:19.4px;color:#fff;">Draw</span>
<span class="t" style="left:339.00px;top:92px;font-size:19.4px;color:#fff;transform:scaleX(0.9902);">Design</span>
<span class="t" style="left:428.80px;top:92px;font-size:19.4px;color:#fff;transform:scaleX(1.0045);">Layout</span>
<span class="t" style="left:518.80px;top:92px;font-size:19.4px;color:#fff;transform:scaleX(0.9313);">References</span>
<span class="t" style="left:643.00px;top:92px;font-size:19.4px;color:#fff;transform:scaleX(1.0371);">Mailings</span>
<span class="t" style="left:746.00px;top:92px;font-size:19.4px;color:#fff;transform:scaleX(0.9455);">Review</span>
<span class="t" style="left:835.20px;top:92px;font-size:19.4px;color:#fff;transform:scaleX(0.9964);">View</span>
<span class="t" style="left:907.00px;top:92px;font-size:19.4px;color:#fff;transform:scaleX(1.0124);">Help</span>
<span class="t" style="left:102.00px;top:92px;font-size:19.4px;color:#fff;font-weight:700;transform:scaleX(1.0391);">Home</span>
<span class="t" style="left:1215.80px;top:91px;font-size:19.4px;color:#fff;transform:scaleX(1.0096);">Comments</span>
<span class="t" style="left:1372.00px;top:91px;font-size:19.4px;color:#fff;transform:scaleX(1.0282);">Editing</span>
<span class="t" style="left:1511.80px;top:91px;font-size:19.4px;color:#0b0b0b;transform:scaleX(0.9544);">Share</span>
<span class="t" style="left:43.20px;top:192px;font-size:17.4px;color:#fff;transform:scaleX(0.8945);">Paste</span>
<span class="t" style="left:36.00px;top:251px;font-size:15.6px;color:#fff;transform:scaleX(1.0140);">Clipboard</span>
<span class="t" style="left:160.30px;top:141px;font-size:17.6px;color:#fff;transform:scaleX(0.9784);">Calibri (Body)</span>
<span class="t" style="left:424.60px;top:141px;font-size:17.6px;color:#fff;transform:scaleX(0.9087);">11</span>
<span class="t" style="left:169.00px;top:177px;font-size:19.6px;color:#d4d4d4;font-weight:700;transform:scaleX(0.8621);">B</span>
<span class="t" style="left:209.11px;top:175px;font-size:20.5px;color:#d4d4d4;font-style:italic;font-family:'Liberation Serif',serif;transform:scaleX(1.2939);">I</span>
<span class="t" style="left:245.30px;top:176px;font-size:19px;color:#d4d4d4;">U</span>
<span class="t" style="left:304.00px;top:180px;font-size:17.5px;color:#d4d4d4;transform:scaleX(1.0277);">ab</span>
<span class="t" style="left:348.00px;top:177px;font-size:19px;color:#d4d4d4;font-weight:700;transform:scaleX(0.9087);">x</span>
<span class="t" style="left:358.80px;top:191px;font-size:10px;color:#3a96dd;font-weight:700;transform:scaleX(0.9712);">2</span>
<span class="t" style="left:387.00px;top:177px;font-size:19px;color:#d4d4d4;font-weight:700;transform:scaleX(0.9087);">x</span>
<span class="t" style="left:397.70px;top:175px;font-size:10px;color:#3a96dd;font-weight:700;transform:scaleX(0.9532);">2</span>
<span class="t" style="left:165.00px;top:212px;font-size:28px;color:#1d2b3a;font-weight:700;transform:scaleX(1.0091);-webkit-text-stroke:2.8px #5cb2f2;paint-order:stroke fill;text-shadow:0 0 2.5px #2b7fd0,0 0 2.5px #2b7fd0;">A</span>
<span class="t" style="left:291.40px;top:212px;font-size:22.4px;color:#d0d0d0;transform:scaleX(1.0307);">A</span>
<span class="t" style="left:348.30px;top:217px;font-size:21.5px;color:#d0d0d0;transform:scaleX(0.9272);">Aa</span>
<span class="t" style="left:416.00px;top:212px;font-size:26.5px;color:#d0d0d0;transform:scaleX(0.9618);">A</span>
<span class="t" style="left:457.80px;top:217px;font-size:20.8px;color:#d0d0d0;transform:scaleX(1.0524);">A</span>
<span class="t" style="left:292.60px;top:251px;font-size:15.6px;color:#fff;transform:scaleX(0.9803);">Font</span>
<span class="t" style="left:575.60px;top:135px;font-size:8.6px;color:#3a96dd;font-weight:700;transform:scaleX(0.6692);">1</span>
<span class="t" style="left:574.60px;top:144px;font-size:8.6px;color:#3a96dd;font-weight:700;transform:scaleX(1.0457);">2</span>
<span class="t" style="left:574.60px;top:153px;font-size:8.6px;color:#3a96dd;font-weight:700;transform:scaleX(1.0457);">3</span>
<span class="t" style="left:635.80px;top:135px;font-size:8.6px;color:#3a96dd;font-weight:700;transform:scaleX(0.7529);">1</span>
<span class="t" style="left:640.00px;top:142px;font-size:11px;color:#3a96dd;font-weight:700;transform:scaleX(0.8397);">a</span>
<span class="t" style="left:648.20px;top:152px;font-size:10.4px;color:#3a96dd;font-weight:700;transform:scaleX(0.6226);">i</span>
<span class="t" style="left:639.80px;top:212px;font-size:14px;color:#3a96dd;font-weight:700;transform:scaleX(1.1278);">A</span>
<span class="t" style="left:640.40px;top:226px;font-size:14px;color:#d0d0d0;font-weight:700;transform:scaleX(1.0288);">Z</span>
<span class="t" style="left:687.00px;top:214px;font-size:22px;color:#d0d0d0;font-weight:700;transform:scaleX(1.3244);">¶</span>
<span class="t" style="left:592.40px;top:251px;font-size:15.6px;color:#fff;transform:scaleX(0.9663);">Paragraph</span>
<span class="t" style="left:804.50px;top:189px;font-size:17.4px;color:#fff;transform:scaleX(0.9181);">Styles</span>
<span class="t" style="left:794.40px;top:251px;font-size:15.6px;color:#fff;transform:scaleX(0.9134);">Styles</span>
<span class="t" style="left:882.60px;top:187px;font-size:17.4px;color:#fff;transform:scaleX(1.0036);">Editing</span>
<span class="t" style="left:966.30px;top:190px;font-size:17.4px;color:#fff;transform:scaleX(1.0689);">Copilot</span>
<span class="t" style="left:976.40px;top:252px;font-size:15.6px;color:#fff;transform:scaleX(1.0355);">More</span>
<span class="t" style="left:1088.30px;top:141px;font-size:17.4px;color:#fff;transform:scaleX(1.0139);">Dictate</span>
<span class="t" style="left:1088.00px;top:180px;font-size:17.4px;color:#fff;transform:scaleX(0.9589);">Transcribe</span>
<span class="t" style="left:1088.80px;top:218px;font-size:17.4px;color:#fff;transform:scaleX(1.0058);">Read Aloud</span>
<span class="t" style="left:1058.20px;top:221px;font-size:20.4px;color:#c8c8c8;transform:scaleX(1.0730);">A</span>
<span class="t" style="left:1103.00px;top:252px;font-size:15.6px;color:#fff;transform:scaleX(0.9854);">Voice</span>
<span class="t" style="left:1224.70px;top:190px;font-size:17.4px;color:#fff;transform:scaleX(1.0231);">Editor</span>
<span class="t" style="left:1227.40px;top:252px;font-size:15.6px;color:#fff;transform:scaleX(0.9939);">Editor</span>
<span class="t" style="left:1157.00px;top:295px;font-size:31px;color:#fff;transform:scaleX(1.0006) translateZ(0);will-change:transform;-webkit-text-stroke:0.55px #0a0a0a;">What do you want to do (B...</span>
<span class="t" style="left:1223.30px;top:387px;font-size:23px;color:#3558b8;font-weight:700;transform:scaleX(0.9790);background:linear-gradient(90deg,#2458b5,#6a62c6);-webkit-background-clip:text;background-clip:text;-webkit-text-fill-color:transparent;-webkit-text-stroke:0.4px #fff;">Things I can help with:</span>
<span class="t" style="left:1241.20px;top:444px;font-size:18.4px;color:#242424;transform:scaleX(0.9933);">Suggesting or rewriting content for your</span>
<span class="t" style="left:1241.04px;top:468px;font-size:18.4px;color:#242424;transform:scaleX(0.9868);">word</span>
<span class="t" style="left:1241.20px;top:495px;font-size:18.4px;color:#242424;transform:scaleX(0.9900);">Finding the right image</span>
<span class="t" style="left:1240.80px;top:522px;font-size:18.4px;color:#242424;transform:scaleX(0.9832);">Taking care of formatting details</span>
<span class="t" style="left:1235.00px;top:582px;font-size:18px;color:#fff;transform:scaleX(0.9853);">Learn More</span>
<span class="t" style="left:1365.40px;top:582px;font-size:18px;color:#242424;transform:scaleX(0.9429);">Dismiss</span>
<span class="t" style="left:1482.40px;top:580px;font-size:18px;color:#242424;transform:scaleX(0.9792);">2 of 3</span>
<span class="t" style="left:1204.60px;top:865px;font-size:19.6px;color:#bdbdbd;transform:scaleX(1.0780);">Type what you want to do</span>
<span class="t" style="left:1179.80px;top:986px;font-size:15.8px;color:#707070;transform:scaleX(1.0443);">Content is generated by AI and might contain inaccuracies</span>
<span class="t" style="left:1179.80px;top:1007px;font-size:15.8px;color:#707070;transform:scaleX(1.0415);">or sensitive material. Be sure to verify information.</span>
<span class="t" style="left:1181.00px;top:1036px;font-size:18.4px;color:#2f5fb8;transform:scaleX(0.9749);text-decoration:underline;text-decoration-thickness:1.3px;text-underline-offset:2px;">Help</span>
<span class="t" style="left:12.30px;top:1097px;font-size:15.8px;color:#fff;transform:scaleX(0.9342);">Page 1 of 1</span>
<span class="t" style="left:117.00px;top:1097px;font-size:15.8px;color:#fff;transform:scaleX(1.0051);">0 words</span>
<span class="t" style="left:200.30px;top:1097px;font-size:15.8px;color:#fff;transform:scaleX(0.9605);">English (United States)</span>
<span class="t" style="left:381.30px;top:1097px;font-size:15.8px;color:#fff;transform:scaleX(0.9492);">Text Predictions: On</span>
<span class="t" style="left:570.30px;top:1097px;font-size:15.8px;color:#fff;transform:scaleX(0.9734);">Accessibility: Good to go</span>
<span class="t" style="left:1146.80px;top:1097px;font-size:15.8px;color:#fff;transform:scaleX(0.8925);">Focus</span>
<span class="t" style="left:1596.50px;top:1097px;font-size:15.8px;color:#fff;transform:scaleX(0.9501);">100%</span>
</div>
<div id="win"></div>
</body></html>
